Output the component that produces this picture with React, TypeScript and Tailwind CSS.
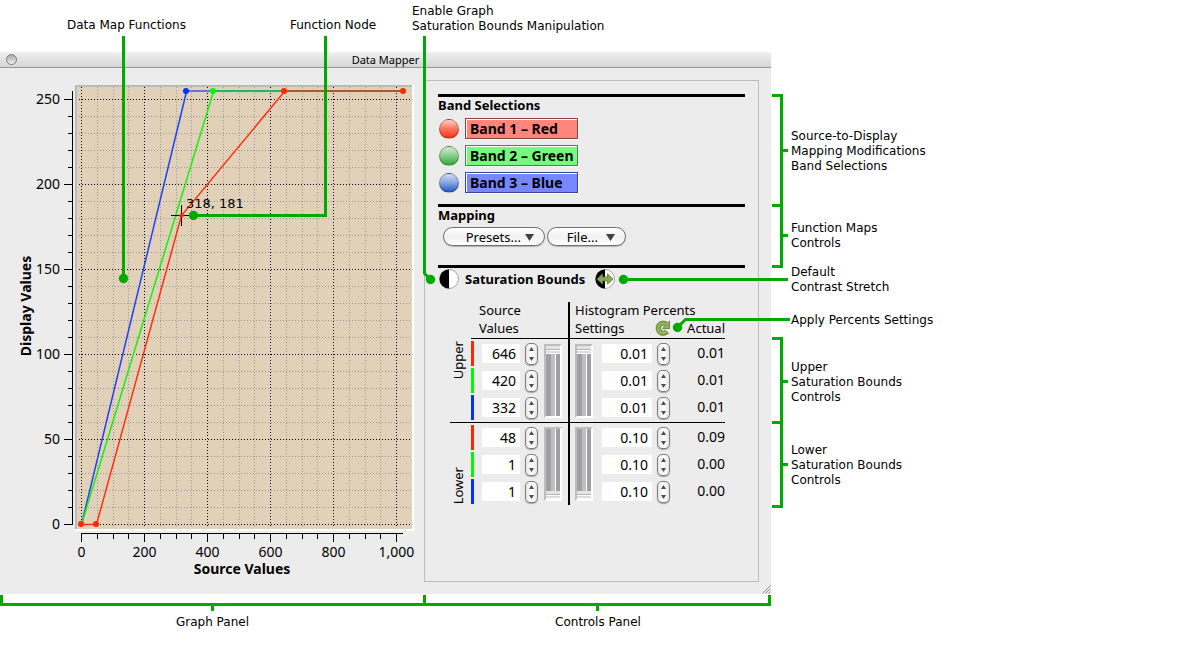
import React, { useState } from "react";

type Rgb = "red" | "green" | "blue";

interface BoundsRow {
  band: Rgb;
  source: string;
  percent: string;
  actual: string;
}

const BAND_FILL: Record<Rgb, string> = {
  red: "bg-[#ff2600]",
  green: "bg-[#00f900]",
  blue: "bg-[#0433ff]",
};

const BANDS = [
  {
    id: "red",
    label: "Band 1 – Red",
    ball: "from-[#ffcfc6] via-[#ff7058] to-[#f52a00]",
    field: "bg-[#ff857d] border-[#94403a]",
  },
  {
    id: "green",
    label: "Band 2 – Green",
    ball: "from-[#d4ecd4] via-[#85cc88] to-[#27a934]",
    field: "bg-[#76fa7e] border-[#3a8a40]",
  },
  {
    id: "blue",
    label: "Band 3 – Blue",
    ball: "from-[#d0dcf4] via-[#86a4de] to-[#1c56c4]",
    field: "bg-[#7687ff] border-[#3a4594]",
  },
];

const UPPER: BoundsRow[] = [
  { band: "red", source: "646", percent: "0.01", actual: "0.01" },
  { band: "green", source: "420", percent: "0.01", actual: "0.01" },
  { band: "blue", source: "332", percent: "0.01", actual: "0.01" },
];

const LOWER: BoundsRow[] = [
  { band: "red", source: "48", percent: "0.10", actual: "0.09" },
  { band: "green", source: "1", percent: "0.10", actual: "0.00" },
  { band: "blue", source: "1", percent: "0.10", actual: "0.00" },
];

const GREEN = "#00aa00";

// chart scales, in svg units
const sx = (v: number) => Math.round(81 + v * 0.315) + 0.5;
const sy = (v: number) => Math.round(524 - v * 1.7) + 0.5;
const steps = (max: number, step: number) =>
  Array.from({ length: Math.floor(max / step) + 1 }, (_, i) => i * step);

function Chart() {
  const xs = steps(1000, 50);
  const ys = steps(250, 10);
  const line = (pts: number[][]) => pts.map(([x, y]) => `${sx(x)},${sy(y)}`).join(" ");

  return (
    <svg
      viewBox="0 68 424 526"
      className="block w-[424px] h-[526px] shrink-0"
      role="img"
      aria-label="Data map functions"
      fontFamily='"Noto Sans", sans-serif'
    >
      {/* plot area */}
      <rect x="75" y="85" width="339" height="446" fill="#fff" />
      <path d="M75 85H412V87H77V529H75Z" fill="#bababa" />
      <rect x="77" y="87" width="335" height="442" fill="#e1d1b8" />

      <g shapeRendering="crispEdges" strokeDasharray="1 2">
        {xs.filter((x) => x % 200).map((x) => (
          <line key={x} x1={sx(x)} x2={sx(x)} y1="87" y2="527" stroke="#97979c" />
        ))}
        {ys.filter((y) => y % 50).map((y) => (
          <line key={y} x1="79" x2="411" y1={sy(y)} y2={sy(y)} stroke="#97979c" />
        ))}
        {xs.filter((x) => x % 200 === 0).map((x) => (
          <line key={x} x1={sx(x)} x2={sx(x)} y1="87" y2="527" stroke="#000" />
        ))}
        {ys.filter((y) => y % 50 === 0).map((y) => (
          <line key={y} x1="79" x2="411" y1={sy(y)} y2={sy(y)} stroke="#000" />
        ))}
      </g>

      {/* axes */}
      <g shapeRendering="crispEdges" stroke="#000">
        <line x1="72.5" x2="72.5" y1="91" y2="525" />
        <line x1="81" x2="403" y1="533.5" y2="533.5" />
        {ys.map((y) => (
          <line key={y} x1={y % 50 ? 68 : 64} x2="72" y1={sy(y)} y2={sy(y)} />
        ))}
        {xs.map((x) => (
          <line key={x} x1={sx(x)} x2={sx(x)} y1="533" y2={x % 200 ? 539 : 542} />
        ))}
      </g>
      <g fontSize="14" textAnchor="end">
        {steps(250, 50).map((y) => (
          <text key={y} x="60" y={sy(y) + 4.5}>{y}</text>
        ))}
      </g>
      <g fontSize="14" textAnchor="middle">
        {steps(1000, 200).map((x) => (
          <text key={x} x={sx(x)} y="557">{x.toLocaleString("en-US")}</text>
        ))}
      </g>
      <g fontSize="14" fontWeight="700" textAnchor="middle">
        <text x="242" y="574">Source Values</text>
        <text transform="translate(31 306) rotate(-90)">Display Values</text>
      </g>

      {/* map functions */}
      <g fill="none" strokeWidth="1.5">
        <polyline points={line([[0, 0], [332, 255]])} stroke="#1f40f5" />
        <polyline points={line([[0, 0], [420, 255]])} stroke="#16f010" />
        <polyline points={line([[0, 0], [48, 0], [318, 182], [646, 255]])} stroke="#fb3010" />
      </g>
      <g strokeWidth="2">
        <line x1="186" x2="213" y1="91" y2="91" stroke="#6a72dd" />
        <line x1="213" x2="284" y1="91" y2="91" stroke="#22b36c" />
        <line x1="284" x2="403" y1="91" y2="91" stroke="#a35c33" />
      </g>
      <path d="M171 215.500H193M181.500 205V226" stroke="#000" />
      <circle cx="186" cy="91" r="3" fill="#0433ff" />
      <circle cx="213" cy="91" r="3" fill="#00f900" />
      {[[284, 91], [403, 91], [96, 524], [81, 524], [181.5, 215.5]].map(([x, y]) => (
        <circle key={x} cx={x} cy={y} r={x === 181.5 ? 2.2 : 3} fill="#ff2600" />
      ))}
      <text x="186" y="208" fontSize="13" fontFamily='"DejaVu Sans", sans-serif'>318, 181</text>
    </svg>
  );
}

function ContrastIcon({ arrows = false }: { arrows?: boolean }) {
  return (
    <svg viewBox="0 0 20 20" className="w-5 h-5">
      <circle cx="10" cy="10" r="9.500" fill="#fff" stroke="#a5a5a5" />
      <path d="M10 0.500A9.500 9.500 0 0 0 10 19.500Z" fill="#000" />
      {arrows && (
        <path
          d="M2 10L7.500 4.800V8H12.500V4.800L18 10L12.500 15.200V12H7.500V15.200Z"
          fill="#87a94e"
          stroke="#5d7a33"
          strokeWidth="0.800"
        />
      )}
    </svg>
  );
}

function MenuButton({ children, className }: { children: React.ReactNode; className: string }) {
  return (
    <button
      type="button"
      aria-haspopup="menu"
      className={`h-[19px] flex items-center justify-end rounded-full border border-[#6e6e6e] bg-linear-to-b from-white via-[#f1f1f1] to-white shadow-[0_1px_1px_rgba(0,0,0,0.25)] text-[13px] leading-4 ${className}`}
    >
      {children}
      <svg viewBox="0 0 9 7" className="w-[9px] h-[7px] mt-px">
        <path d="M0 0H9L4.500 7Z" fill="#404040" />
      </svg>
    </button>
  );
}

function Spinner({ label, value, width }: { label: string; value: string; width: string }) {
  const [text, setText] = useState(value);
  const decimals = value.includes(".") ? 2 : 0;
  const step = decimals ? 0.01 : 1;
  const bump = (dir: number) => setText((Number(text) + dir * step).toFixed(decimals));

  return (
    <div className="flex items-center gap-[5px] h-[25px]">
      <input
        aria-label={label}
        value={text}
        onChange={(e) => setText(e.target.value)}
        className={`${width} h-[19px] bg-white pr-1 text-right text-[14px] leading-[19px] outline-none`}
      />
      <div className="flex flex-col w-[13px] h-[22px] rounded-[5px] border border-[#7d7d7d] bg-linear-to-r from-[#e6e6e6] via-white to-[#e6e6e6] shadow-[0_1px_1px_rgba(0,0,0,0.3)]">
        <button
          type="button"
          aria-label={`Increase ${label}`}
          onClick={() => bump(1)}
          className="flex-1 flex items-center justify-center"
        >
          <svg viewBox="0 0 5 4" className="w-[5px] h-1"><path d="M0 4L2.500 0L5 4Z" fill="#4d4d4d" /></svg>
        </button>
        <button
          type="button"
          aria-label={`Decrease ${label}`}
          onClick={() => bump(-1)}
          className="flex-1 flex items-center justify-center"
        >
          <svg viewBox="0 0 5 4" className="w-[5px] h-1"><path d="M0 0L2.500 4L5 0Z" fill="#4d4d4d" /></svg>
        </button>
      </div>
    </div>
  );
}

function Slider({ label, value }: { label: string; value: number }) {
  return (
    <input
      type="range"
      aria-label={label}
      defaultValue={value}
      className="block appearance-none [writing-mode:vertical-lr] [direction:rtl] w-[18px] h-[74px] border-2 border-t-[#bdbdbd] border-l-[#bdbdbd] border-r-white border-b-white bg-[linear-gradient(to_right,#a0a0a4_5px,#c0c0c0_5px,#c0c0c0_9px,#fff_9px,#fff_10px,#a0a0a4_10px)] [&::-webkit-slider-thumb]:appearance-none [&::-webkit-slider-thumb]:w-[14px] [&::-webkit-slider-thumb]:h-2 [&::-webkit-slider-thumb]:bg-[linear-gradient(#e4e4e0_3px,#b4b4b4_3px,#b4b4b4_4px,#fff_4px,#fff_5px,#dcdcdc_5px,#dcdcdc_7px,#fff_7px)]"
    />
  );
}

function BoundsGroup({ name, rows, position }: { name: string; rows: BoundsRow[]; position: number }) {
  const lower = name === "Lower";
  return (
    <tbody>
      {rows.map((row, i) => {
        const edge = i === 0
          ? lower ? "border-t border-black pt-[2px] pb-px" : "pt-[2px] pb-px"
          : i === 2 && !lower ? "pt-px pb-[2px]" : "py-px";
        const top = lower ? "border-t border-black" : "";
        return (
          <tr key={row.band}>
            {i === 0 && (
              <th
                rowSpan={3}
                scope="rowgroup"
                className={`px-0 font-normal ${top} ${lower ? "pt-0 pb-px align-bottom" : "pt-[2px] pb-0 align-top"}`}
              >
                <span className="block w-4 leading-4 text-[13px] [writing-mode:vertical-rl] rotate-180">
                  {name}
                </span>
              </th>
            )}
            <td className={`px-0 ${edge}`}>
              <div className={`w-[3px] h-[25px] ${BAND_FILL[row.band]}`} />
            </td>
            <td className={`pl-2 pr-0 ${edge}`}>
              <Spinner label={`${name} ${row.band} source value`} value={row.source} width="w-[38px]" />
            </td>
            {i === 0 && (
              <>
                <td rowSpan={3} className={`pl-[2px] pr-0 py-0 align-middle ${top}`}>
                  <Slider label={`${name} source values`} value={position} />
                </td>
                <td rowSpan={3} className={`border-l-2 border-l-black pl-[5px] pr-0 py-0 align-middle ${top}`}>
                  <Slider label={`${name} percents`} value={position} />
                </td>
              </>
            )}
            <td className={`pl-1 pr-0 ${edge}`}>
              <Spinner label={`${name} ${row.band} percent`} value={row.percent} width="w-[50px]" />
            </td>
            <td className={`px-0 text-right text-[14px] ${edge}`}>
              <span className="block h-[25px] leading-6">{row.actual}</span>
            </td>
          </tr>
        );
      })}
    </tbody>
  );
}

function ControlsPanel() {
  return (
    <section className="flex-1 mt-3 mr-3 mb-3 border border-[#bcbcbc] p-[13px] min-h-[502px]">
      <div className="border-t-[3px] border-black h-[110px]">
        <h2 className="text-[13px] leading-4 font-bold">Band Selections</h2>
        <div className="flex flex-col gap-[6px] mt-[5px] pl-px">
          {BANDS.map((band) => (
            <div key={band.id} className="flex items-center gap-[6px]">
              <button
                type="button"
                aria-label={`Select ${band.id} band`}
                className={`w-5 h-5 rounded-full border border-black/25 bg-linear-to-b ${band.ball}`}
              />
              <input
                readOnly
                aria-label={`${band.id} band`}
                defaultValue={band.label}
                className={`w-[113px] h-[21px] border pl-1 text-[14px] leading-[19px] font-bold outline-none shadow-[inset_1px_1px_0_#fff,1px_1px_0_#fff] ${band.field}`}
              />
            </div>
          ))}
        </div>
      </div>

      <div className="border-t-[3px] border-black h-[61px]">
        <h2 className="text-[13px] leading-4 font-bold">Mapping</h2>
        <div className="flex gap-[2px] mt-1 pl-[5px]">
          <MenuButton className="w-[102px] pr-[10px] gap-1">Presets...</MenuButton>
          <MenuButton className="w-[79px] pr-[10px] gap-2">File...</MenuButton>
        </div>
      </div>

      <div className="border-t-[3px] border-black">
        <div className="flex items-center gap-[6px] h-[22px] pl-px">
          <button type="button" aria-label="Enable graph saturation bounds manipulation">
            <ContrastIcon />
          </button>
          <h2 className="min-w-[124px] text-[13px] leading-4 font-bold">Saturation Bounds</h2>
          <button type="button" aria-label="Default contrast stretch">
            <ContrastIcon arrows />
          </button>
        </div>

        <table className="table-fixed border-separate border-spacing-0 w-[275px] ml-3 mt-3">
          <colgroup>
            <col className="w-[21px]" />
            <col className="w-[3px]" />
            <col className="w-[68px]" />
            <col className="w-[26px]" />
            <col className="w-[30px]" />
            <col className="w-[76px]" />
            <col className="w-[51px]" />
          </colgroup>
          <thead className="text-[13px] leading-4 text-left">
            <tr>
              <td className="p-0" />
              <td className="p-0" />
              <th colSpan={2} className="pt-0 pb-[2px] pl-[5px] pr-0 font-normal">Source</th>
              <th colSpan={3} className="pt-0 pb-[2px] pl-[5px] pr-0 font-normal border-l-2 border-black">
                Histogram Percents
              </th>
            </tr>
            <tr>
              <td className="p-0" />
              <td className="p-0 border-b border-black" />
              <th colSpan={2} className="pt-0 pb-[2px] pl-[5px] pr-0 font-normal border-b border-black">
                Values
              </th>
              <th colSpan={2} className="pt-0 pb-[2px] pl-[5px] pr-0 font-normal border-l-2 border-b border-black">
                <div className="flex items-center justify-between pr-[3px]">
                  Settings
                  <button type="button" aria-label="Apply percents settings">
                    <svg viewBox="0 0 16 16" className="w-4 h-4">
                      <path
                        d="M12 11.300A4.900 4.900 0 1 1 11 4.200"
                        fill="none"
                        stroke="#5d7a33"
                        strokeWidth="5.200"
                      />
                      <path d="M14.500 1V8.500H7.500Z" fill="#8fb158" stroke="#5d7a33" strokeWidth="0.800" />
                      <path
                        d="M11.700 11.200A4.800 4.800 0 1 1 11.400 4.800"
                        fill="none"
                        stroke="#8fb158"
                        strokeWidth="3.600"
                      />
                    </svg>
                  </button>
                </div>
              </th>
              <th className="pt-0 pb-[2px] px-0 font-normal text-right border-b border-black">Actual</th>
            </tr>
          </thead>
          <BoundsGroup name="Upper" rows={UPPER} position={100} />
          <BoundsGroup name="Lower" rows={LOWER} position={0} />
        </table>
      </div>
    </section>
  );
}

// leader lines and brackets drawn over the window
function Callouts() {
  return (
    <svg
      viewBox="0 0 1180 650"
      className="absolute left-0 top-0 w-[1180px] h-[650px] pointer-events-none"
      aria-hidden="true"
    >
      <g fill="none" stroke={GREEN} strokeWidth="3">
        <path d="M123.500 36V278" />
        <path d="M325.500 36V215.500H193" />
        <path d="M424.500 36V273.500L430.500 279.500" />
        <path d="M623.500 279.500H788" />
        <path d="M677.500 327.500L685.500 319.500H790" />
        <path d="M772 95.500H781.500V266.500H772M772 205.500H781.500M781.500 150.500H788M781.500 235.500H788" />
        <path d="M772 338.500H781.500V506.500H772M772 422.500H781.500M781.500 381.500H788M781.500 464.500H788" />
        <path d="M1.500 595V604.500H769.500V595M424.500 595V604.500M212.500 604V611M597.500 604V611" />
      </g>
      <g fill={GREEN}>
        <circle cx="123.500" cy="278.500" r="4.700" />
        <circle cx="193.500" cy="215.500" r="4.700" />
        <circle cx="430.500" cy="279.500" r="4.700" />
        <circle cx="623.500" cy="279.500" r="4.700" />
        <circle cx="677.500" cy="327.500" r="4.700" />
      </g>
    </svg>
  );
}

export default function App() {
  return (
    <main className="relative min-h-screen bg-white text-black overflow-hidden font-['DejaVu_Sans',sans-serif] text-[12px] leading-[15px]">
      <header className="flex items-start h-[52px] pt-1 pl-[67px]">
        <p className="w-[223px] mt-[14px]">Data Map Functions</p>
        <p className="w-[122px] mt-[14px]">Function Node</p>
        <p>Enable Graph<br />Saturation Bounds Manipulation</p>
      </header>

      <div className="flex">
        <div className="relative flex-1 max-w-[771px] bg-[#ececec] font-['Noto_Sans',sans-serif]">
          <div className="flex items-center h-4 pl-[6px] pr-[17px] border-b border-[#979797] bg-linear-to-b from-[#f0f0f0] to-[#d6d6d6]">
            <button
              type="button"
              aria-label="Close"
              className="w-[11px] h-[11px] rounded-full border border-[#7c7c7c] bg-linear-to-b from-[#a8a8a8] to-[#f2f2f2]"
            />
            <h1 className="flex-1 text-center text-[11px] leading-[15px]">Data Mapper</h1>
          </div>
          <div className="flex">
            <Chart />
            <ControlsPanel />
          </div>
          <svg viewBox="0 0 9 9" className="absolute right-0 bottom-0 w-[9px] h-[9px]">
            <path d="M0.500 8.500L8.500 0.500M3.500 8.500L8.500 3.500M6.500 8.500L8.500 6.500" stroke="#8c8c8c" />
          </svg>
        </div>

        <aside className="pl-5 pt-px">
          <p className="mt-[76px]">Source-to-Display<br />Mapping Modifications<br />Band Selections</p>
          <p className="mt-[47px]">Function Maps<br />Controls</p>
          <p className="mt-[14px]">Default<br />Contrast Stretch</p>
          <p className="mt-[18px]">Apply Percents Settings</p>
          <p className="mt-8">Upper<br />Saturation Bounds<br />Controls</p>
          <p className="mt-[38px]">Lower<br />Saturation Bounds<br />Controls</p>
        </aside>
      </div>

      <footer className="flex pt-[21px]">
        <p className="w-[425px] text-center">Graph Panel</p>
        <p className="w-[346px] text-center">Controls Panel</p>
      </footer>

      <Callouts />
    </main>
  );
}
